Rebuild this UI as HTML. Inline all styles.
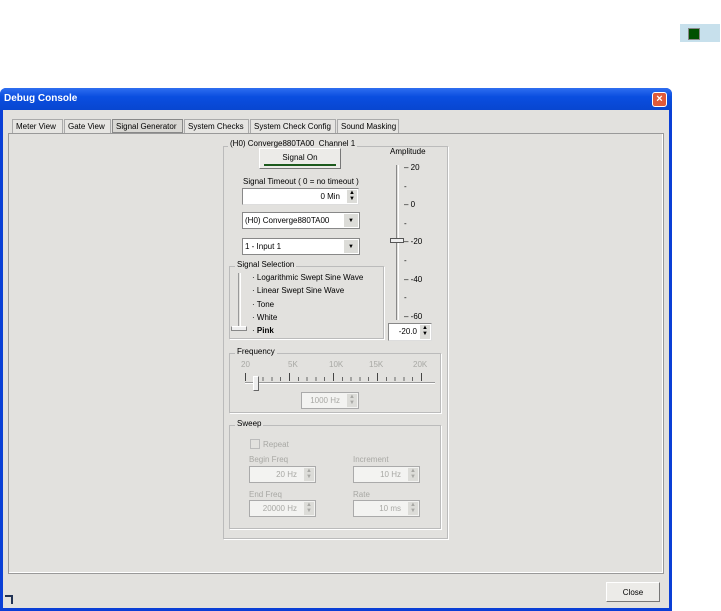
<!DOCTYPE html>
<html><head><style>
*{box-sizing:border-box;margin:0;padding:0}
body{width:721px;height:611px;background:#fff;position:relative;overflow:hidden;font-family:"Liberation Sans",sans-serif;font-size:8px;color:#000}
.a{position:absolute}
.win{left:0;top:88px;width:672px;height:523px;background:#0a3fd6;border-radius:6px 6px 0 0}
.title{left:0;top:88px;width:672px;height:22px;background:linear-gradient(#2f6ef0,#0a4ee0 40%,#0846d0);border-radius:6px 6px 0 0;color:#fff;font-weight:bold;font-size:10px;padding:5px 4px}
.body{left:3px;top:110px;width:666px;height:498px;background:#e2e1de}
.panel{left:8px;top:133px;width:656px;height:441px;border:1px solid #999;background:#e2e1de;box-shadow:inset -1px -1px #fff}
.tab{top:119px;height:14px;padding:2px 3px;border:1px solid #aaa;border-bottom:none;background:#e6e5e2;white-space:nowrap}
.grp{border:1px solid #bbb;box-shadow:1px 1px #fff}
.lbl{background:#e2e1de;padding:0 2px;white-space:nowrap}
.inp{background:#fff;border:1px solid #888;border-right-color:#ddd;border-bottom-color:#ddd;text-align:right;padding:3px 18px 0 2px}
.spin{position:absolute;right:1px;top:1px;width:10px;bottom:1px;background:#dcdcd8;font-size:6px;line-height:6px;text-align:center}
.dd{background:#fff;border:1px solid #888;padding:3px 2px}
.ddb{position:absolute;right:1px;top:1px;bottom:1px;width:14px;background:#dcdcd8;font-size:6px;text-align:center;line-height:14px}
.dis{color:#a8a8a4}
.disi{background:#f3f3f1;border:1px solid #aaa;text-align:right;padding:3px 18px 0 2px;color:#a8a8a4}
.btn{background:#ecebe8;border:1px solid #777;border-top-color:#fff;border-left-color:#fff;text-align:center}
</style></head><body>
<div class="a" style="left:680px;top:24px;width:40px;height:18px;background:#c7e0ec"></div>
<div class="a" style="left:688px;top:28px;width:12px;height:12px;background:#005000;border:1px solid #888"></div>
<div class="a win"></div>
<div class="a title">Debug Console</div>
<div class="a" style="left:652px;top:92px;width:15px;height:15px;background:#e05a3a;border:1px solid #fff;border-radius:3px;color:#fff;font-size:11px;font-weight:bold;text-align:center;line-height:13px">×</div>
<div class="a body"></div>
<div class="a panel"></div>
<div class="a tab" style="left:12px;width:51px">Meter View</div>
<div class="a tab" style="left:64px;width:47px">Gate View</div>
<div class="a tab" style="left:112px;width:71px;border:1px solid #888;background:#d8d7d3">Signal Generator</div>
<div class="a tab" style="left:184px;width:65px">System Checks</div>
<div class="a tab" style="left:250px;width:86px">System Check Config</div>
<div class="a tab" style="left:337px;width:62px">Sound Masking</div>

<div class="a grp" style="left:223px;top:146px;width:225px;height:393px"></div>
<div class="a lbl" style="left:228px;top:139px">(H0) Converge880TA00 &nbsp;Channel 1</div>
<div class="a btn" style="left:259px;top:148px;width:82px;height:21px;padding-top:4px">Signal On<div class="a" style="left:4px;right:4px;bottom:2px;height:2px;background:#1d5a1d"></div></div>
<div class="a" style="left:243px;top:177px">Signal Timeout ( 0 = no timeout )</div>
<div class="a inp" style="left:242px;top:188px;width:117px;height:17px">0 Min<div class="spin">▲<br>▼</div></div>
<div class="a dd" style="left:242px;top:212px;width:118px;height:17px">(H0) Converge880TA00<div class="ddb">▼</div></div>
<div class="a dd" style="left:242px;top:238px;width:118px;height:17px">1 - Input 1<div class="ddb">▼</div></div>
<div class="a grp" style="left:229px;top:266px;width:155px;height:73px"></div>
<div class="a lbl" style="left:235px;top:260px">Signal Selection</div>
<div class="a" style="left:238px;top:273px;width:3px;height:57px;border-left:1px solid #999;border-right:1px solid #fff"></div>
<div class="a" style="left:231px;top:326px;width:16px;height:5px;background:#eee;border:1px solid #888;border-top-color:#fff"></div>
<div class="a" style="left:252px;top:271px;line-height:13.3px">· Logarithmic Swept Sine Wave<br>· Linear Swept Sine Wave<br>· Tone<br>· White<br>· <b>Pink</b></div>
<div class="a" style="left:390px;top:147px">Amplitude</div>
<div class="a" style="left:396px;top:165px;width:3px;height:155px;border-left:1px solid #888;border-right:1px solid #fff"></div>
<div class="a" style="left:390px;top:238px;width:14px;height:5px;background:#eee;border:1px solid #555"></div>
<div class="a" style="left:404px;top:159px;line-height:18.6px">– 20<br>-<br>– 0<br>-<br>– -20<br>-<br>– -40<br>-<br>– -60</div>
<div class="a inp" style="left:388px;top:323px;width:44px;height:18px;padding-right:14px">-20.0<div class="spin">▲<br>▼</div></div>

<div class="a grp" style="left:229px;top:353px;width:212px;height:60px"></div>
<div class="a lbl" style="left:235px;top:347px">Frequency</div>
<div class="a dis" style="left:241px;top:360px;width:190px">20<span class="a" style="left:47px">5K</span><span class="a" style="left:88px">10K</span><span class="a" style="left:128px">15K</span><span class="a" style="left:172px">20K</span></div>
<div class="a" style="left:245px;top:373px;width:176px;height:8px;background:repeating-linear-gradient(90deg,#666 0 1px,transparent 1px 8.8px);clip-path:inset(4px 0 0 0)"></div>
<div class="a" style="left:245px;top:373px;width:178px;height:8px;background:repeating-linear-gradient(90deg,#444 0 1px,transparent 1px 44px)"></div>
<div class="a" style="left:245px;top:382px;width:190px;height:2px;border-top:1px solid #999;border-bottom:1px solid #fff"></div>
<div class="a" style="left:253px;top:376px;width:6px;height:15px;background:#eee;border:1px solid #666;border-top-color:#fff;border-left-color:#fff"></div>
<div class="a disi" style="left:301px;top:392px;width:58px;height:17px">1000 Hz<div class="spin">▲<br>▼</div></div>

<div class="a grp" style="left:229px;top:425px;width:212px;height:104px"></div>
<div class="a lbl" style="left:235px;top:419px">Sweep</div>
<div class="a" style="left:250px;top:439px;width:10px;height:10px;border:1px solid #bbb"></div>
<div class="a dis" style="left:263px;top:440px">Repeat</div>
<div class="a dis" style="left:249px;top:455px">Begin Freq</div>
<div class="a disi" style="left:249px;top:466px;width:67px;height:17px">20 Hz<div class="spin">▲<br>▼</div></div>
<div class="a dis" style="left:353px;top:455px">Increment</div>
<div class="a disi" style="left:353px;top:466px;width:67px;height:17px">10 Hz<div class="spin">▲<br>▼</div></div>
<div class="a dis" style="left:249px;top:490px">End Freq</div>
<div class="a disi" style="left:249px;top:500px;width:67px;height:17px">20000 Hz<div class="spin">▲<br>▼</div></div>
<div class="a dis" style="left:353px;top:490px">Rate</div>
<div class="a disi" style="left:353px;top:500px;width:67px;height:17px">10 ms<div class="spin">▲<br>▼</div></div>

<div class="a btn" style="left:606px;top:582px;width:54px;height:20px;padding-top:5px">Close</div>
<div class="a" style="left:5px;top:595px;width:8px;height:9px;border-top:2px solid #235;border-right:2px solid #235"></div>
</body></html>
